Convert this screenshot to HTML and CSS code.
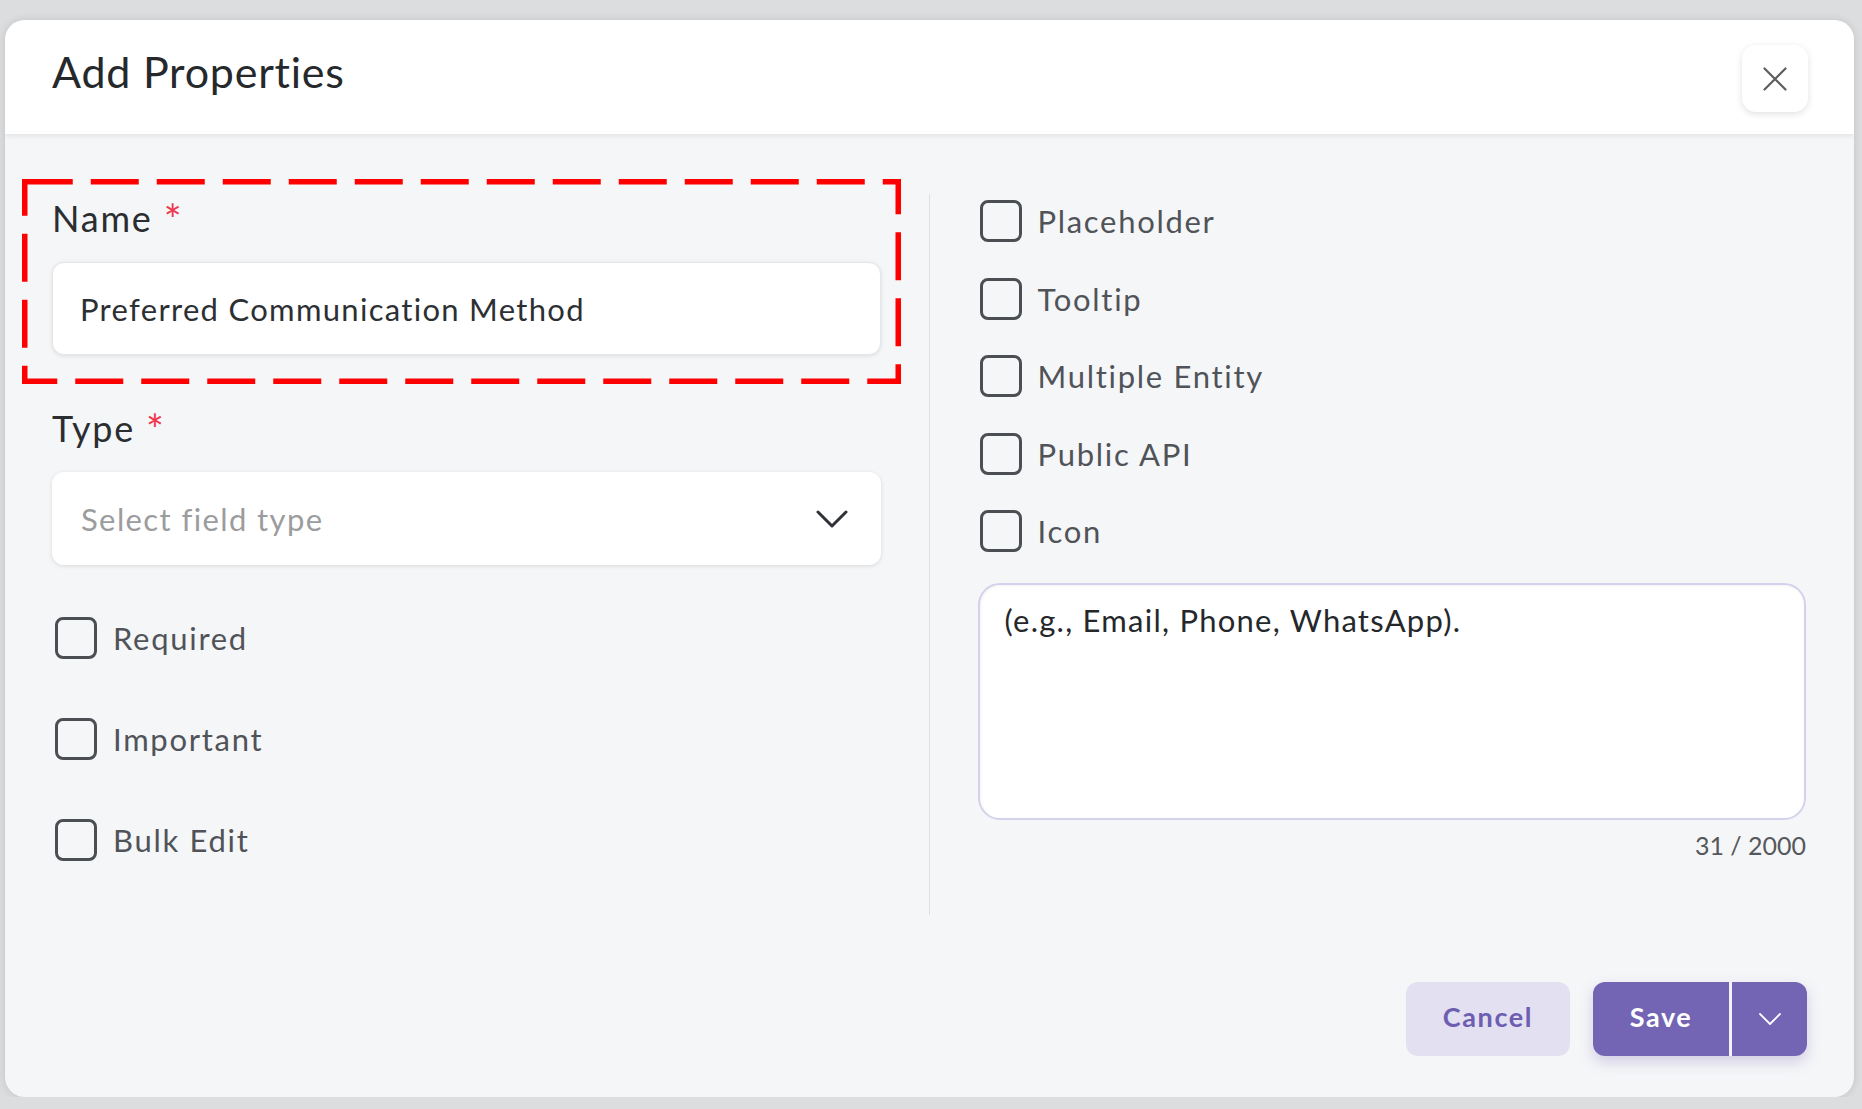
FILE: index.html
```html
<!DOCTYPE html>
<html lang="en">
<head>
    <meta charset="UTF-8">
    <meta name="viewport" content="width=device-width, initial-scale=1.0">
    <title>Add Properties</title>
    <link rel="stylesheet" href="styles.css">
</head>
<body>
    <div class="modal">
        <div class="modal-header">
            <h1>Add Properties</h1>
            <button class="close-btn" type="button" aria-label="Close">
                <svg width="24" height="24" viewBox="0 0 24 24"><path d="M1.5 1.5L22.5 22.5M22.5 1.5L1.5 22.5" stroke="#5b5d61" stroke-width="2.2" stroke-linecap="round"/></svg>
            </button>
        </div>

        <div class="modal-body">
            <div class="col col-left">
                <div class="field field-name">
                    <label class="field-label" for="propName">Name <span class="req">*</span></label>
                    <input class="text-input" id="propName" type="text" value="Preferred Communication Method">
                    <svg class="highlight" width="879" height="205" viewBox="0 0 879 205">
                        <rect x="2.75" y="2.75" width="873.5" height="199.5" fill="none" stroke="#ff0000" stroke-width="5.5" stroke-dasharray="48 18"/>
                    </svg>
                </div>
                <div class="field">
                    <label class="field-label">Type <span class="req">*</span></label>
                    <div class="select">
                        <span>Select field type</span>
                        <svg width="32" height="18" viewBox="0 0 32 18"><path d="M2 2L16 16L30 2" fill="none" stroke="#2f3236" stroke-width="3" stroke-linecap="round" stroke-linejoin="round"/></svg>
                    </div>
                </div>
                <div class="check-list check-list-left">
                    <label class="check"><span class="box"></span>Required</label>
                    <label class="check"><span class="box"></span>Important</label>
                    <label class="check"><span class="box"></span>Bulk Edit</label>
                </div>
            </div>

            <div class="divider"></div>

            <div class="col col-right">
                <div class="check-list check-list-right">
                    <label class="check"><span class="box"></span>Placeholder</label>
                    <label class="check"><span class="box"></span>Tooltip</label>
                    <label class="check"><span class="box"></span>Multiple Entity</label>
                    <label class="check"><span class="box"></span>Public API</label>
                    <label class="check"><span class="box"></span>Icon</label>
                </div>
                <textarea class="desc" rows="4">(e.g., Email, Phone, WhatsApp).</textarea>
                <div class="counter">31 / 2000</div>
            </div>
        </div>

        <div class="modal-footer">
            <button class="btn-cancel" type="button">Cancel</button>
            <div class="btn-group">
                <button class="btn-save" type="button">Save</button>
                <button class="btn-more" type="button" aria-label="More">
                    <svg width="22" height="12" viewBox="0 0 22 12"><path d="M1 1L11 11L21 1" fill="none" stroke="#fff" stroke-width="1.8" stroke-linecap="round" stroke-linejoin="round"/></svg>
                </button>
            </div>
        </div>
    </div>
</body>
</html>
```

FILE: styles.css
```css
body {
    margin: 0;
    background-color: #dcdddf;
    font-family: Lato, "Noto Sans", sans-serif;
    color: #2b2e31;
}
button {
    font-family: inherit;
    cursor: pointer;
}
.modal {
    width: 1849px;
    height: 1077px;
    margin: 20px 0 0 5px;
    background: #f5f6f8;
    border-radius: 20px;
    overflow: hidden;
    box-shadow: 0 0 8px rgba(0, 0, 0, 0.12);
    display: flex;
    flex-direction: column;
}
.modal-header {
    flex: none;
    height: 114px;
    background: #fff;
    display: flex;
    align-items: center;
    justify-content: space-between;
    padding: 0 46px 0 47px;
    box-shadow: 0 2px 5px rgba(0, 0, 0, 0.08);
    position: relative;
    z-index: 1;
}
h1 {
    margin: 0 0 10px;
    font-size: 43px;
    line-height: 52px;
    font-weight: 400;
    letter-spacing: 0.018em;
    color: #26292c;
}
.close-btn {
    width: 66px;
    height: 67px;
    margin-top: 3px;
    border: none;
    border-radius: 14px;
    background: #fff;
    box-shadow: 0 2px 7px rgba(0, 0, 0, 0.12);
    display: flex;
    align-items: center;
    justify-content: center;
}

.modal-body {
    display: grid;
    grid-template-columns: 1fr 1px 1fr;
    column-gap: 48px;
    padding: 60px 48px 0 47px;
}
.col {
    padding-bottom: 54px;
}
.col-left {
    padding-top: 2px;
}
.col-right {
    padding-top: 6px;
}
.divider {
    background: #dedfe2;
}

.field {
    position: relative;
}
.field + .field {
    margin-top: 51px;
}
.field-label {
    display: block;
    font-size: 36px;
    line-height: 44px;
    letter-spacing: 0.05em;
    margin-bottom: 22px;
    color: #2b2e31;
}
.req {
    color: #f0364f;
    font-size: 42px;
    line-height: 0;
    letter-spacing: 0;
    position: relative;
    top: 3px;
}
.text-input {
    display: block;
    width: 100%;
    height: 93px;
    box-sizing: border-box;
    border: 1px solid #e6e6e8;
    border-radius: 12px;
    background: #fff;
    padding: 0 27px;
    font-family: inherit;
    font-size: 31px;
    letter-spacing: 0.042em;
    color: #2d3033;
    box-shadow: 0 1px 4px rgba(0, 0, 0, 0.1);
    outline: none;
}
.highlight {
    position: absolute;
    left: -30px;
    top: -17px;
    pointer-events: none;
}
.select {
    height: 93px;
    box-sizing: border-box;
    display: flex;
    align-items: center;
    justify-content: space-between;
    padding: 0 33px 0 29px;
    background: #fff;
    border-radius: 12px;
    box-shadow: 0 1px 4px rgba(0, 0, 0, 0.12);
    font-size: 31px;
    letter-spacing: 0.045em;
    color: #9b9c9e;
}

.check-list {
    display: flex;
    flex-direction: column;
}
.check-list-left {
    margin-top: 52px;
    gap: 59px;
    padding-left: 3px;
}
.check-list-right {
    gap: 35.5px;
    padding-left: 2px;
}
.check {
    display: flex;
    align-items: center;
    gap: 16px;
    height: 42px;
    font-size: 31px;
    letter-spacing: 0.055em;
    color: #505358;
}
.box {
    width: 42px;
    height: 42px;
    box-sizing: border-box;
    border: 3.5px solid #4b4e53;
    border-radius: 8px;
}

.desc {
    display: block;
    width: 100%;
    height: 237px;
    margin-top: 31px;
    box-sizing: border-box;
    border: 2px solid #d5d1ec;
    border-radius: 22px;
    padding: 15px 25px;
    background: #fff;
    font-family: inherit;
    font-size: 31px;
    line-height: 40px;
    letter-spacing: 0.04em;
    color: #25282b;
    resize: none;
    outline: none;
    box-shadow: inset 1px 1px 3px rgba(0, 0, 0, 0.05);
}
.counter {
    margin-top: 10px;
    text-align: right;
    font-size: 25px;
    line-height: 30px;
    color: #55585c;
}

.modal-footer {
    display: flex;
    justify-content: flex-end;
    gap: 23px;
    padding: 67px 47px 0;
}
.btn-cancel {
    width: 164px;
    height: 74px;
    padding: 0 0 5px;
    border: none;
    border-radius: 12px;
    background: #e3e0f2;
    color: #6c5eb1;
    font-size: 27px;
    font-weight: 700;
    letter-spacing: 0.06em;
}
.btn-group {
    display: flex;
    gap: 3px;
    height: 74px;
    border-radius: 12px;
    overflow: hidden;
    background: #f3f1fa;
    box-shadow: 0 6px 14px rgba(115, 100, 180, 0.28);
}
.btn-save,
.btn-more {
    border: none;
    background: #7365b4;
    color: #fff;
}
.btn-save {
    width: 136px;
    padding: 0 0 5px;
    font-size: 27px;
    font-weight: 700;
    letter-spacing: 0.06em;
}
.btn-more {
    width: 75px;
    display: flex;
    align-items: center;
    justify-content: center;
}
```
